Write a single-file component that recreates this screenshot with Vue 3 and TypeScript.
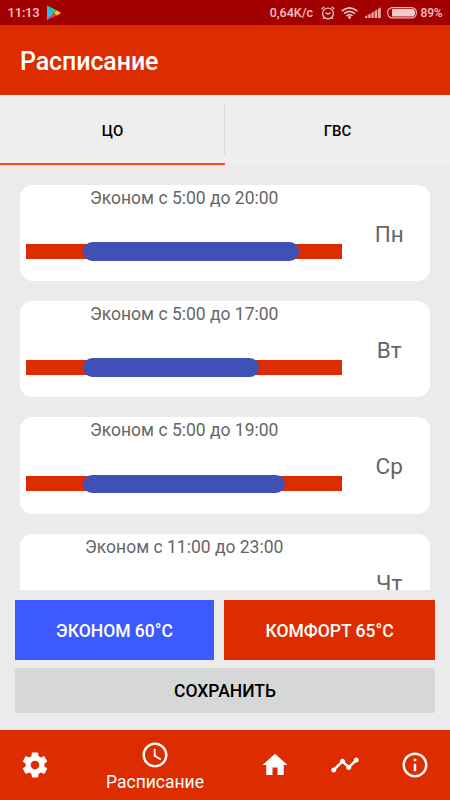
<script setup lang="ts">
interface DaySchedule {
  day: string
  from: number
  to: number
}

const schedule: DaySchedule[] = [
  { day: 'Пн', from: 5, to: 20 },
  { day: 'Вт', from: 5, to: 17 },
  { day: 'Ср', from: 5, to: 19 },
  { day: 'Чт', from: 11, to: 23 },
]

const THUMB = 9.2

function rangeStyle(item: DaySchedule) {
  const start = (item.from / 24) * 100
  const span = ((item.to - item.from) / 24) * 100
  return {
    left: `calc(${start}% - ${THUMB}px)`,
    width: `calc(${span}% + ${THUMB * 2}px)`,
  }
}
</script>

<template>
  <div class="screen">
    <div class="status">
      <span class="time">11:13</span>
      <svg class="play" width="15" height="16" viewBox="0 0 15 16">
        <path d="M1 0.5V15L8 8z" fill="#25c4ee" />
        <path d="M1 0.5L11 5.6L8 8z" fill="#22d68c" />
        <path d="M1 15L11 10.4L8 8z" fill="#f23a50" />
        <path d="M11 5.4L15 7.9L11 10.6L8 8z" fill="#fccb16" />
      </svg>
      <span class="speed">0,64K/c</span>
      <svg class="alarm" width="14" height="14" viewBox="0 0 14 14" fill="none" stroke="#f0c5c5" stroke-width="1.25">
        <circle cx="7" cy="7.4" r="5.4" />
        <path d="M4.5 6.6L7 8.2L9.6 6.5M0.7 3.2L3.3 0.8M13.3 3.2L10.7 0.8M2.9 11.6L2 12.8M11.1 11.6L12 12.8" />
      </svg>
      <svg class="wifi" width="17" height="12" viewBox="0 0 17 12" fill="none" stroke="#f0c5c5" stroke-width="1.6">
        <path d="M0.7 4.2Q8.5-2.4 16.3 4.2M3.1 6.7Q8.5 2.1 13.9 6.7M5.5 9Q8.5 6.5 11.5 9" />
        <circle cx="8.5" cy="10.4" r="1.4" fill="#f0c5c5" stroke="none" />
      </svg>
      <svg class="signal" width="16" height="11" viewBox="0 0 16 11" fill="#e3a9a9">
        <path d="M0 11V9.6L2.4 8.3V11zM3.2 11V7.8L5.6 6.5V11zM6.4 11V6L8.8 4.6V11zM9.6 11V4.1L12 2.8V11zM12.8 11V2.3L15.8 0.2V11z" />
      </svg>
      <svg class="battery" width="30" height="12" viewBox="0 0 30 12">
        <rect x="0.6" y="0.6" width="28.8" height="10.3" rx="4.8" fill="none" stroke="#eab9b9" stroke-width="1.1" />
        <path d="M5 2H25.5Q28 2.6 28 5.75T25.5 9.5H5z" fill="#f2cccc" />
      </svg>
      <span class="percent">89%</span>
    </div>

    <header class="title">Расписание</header>

    <nav class="tabs">
      <div class="tab active">ЦО</div>
      <div class="tab">ГВС</div>
    </nav>

    <main class="list">
      <section v-for="item in schedule" :key="item.day" class="card">
        <div class="range">
          <div class="label">Эконом с {{ item.from }}:00 до {{ item.to }}:00</div>
          <div class="track">
            <div class="bar" :style="rangeStyle(item)"></div>
          </div>
        </div>
        <div class="day">{{ item.day }}</div>
      </section>
    </main>

    <div class="modes">
      <button class="mode eco">ЭКОНОМ 60°C</button>
      <button class="mode comfort">КОМФОРТ 65°C</button>
    </div>
    <button class="save">СОХРАНИТЬ</button>

    <footer class="bottom">
      <div class="item">
        <svg width="30" height="30" viewBox="0 0 24 24" fill="#fff">
          <path d="M19.43 12.98c.04-.32.07-.64.07-.98s-.03-.66-.07-.98l2.11-1.65c.19-.15.24-.42.12-.64l-2-3.46c-.12-.22-.39-.3-.61-.22l-2.49 1c-.52-.4-1.08-.73-1.69-.98l-.38-2.65C14.46 2.18 14.25 2 14 2h-4c-.25 0-.46.18-.49.42l-.38 2.65c-.61.25-1.17.59-1.69.98l-2.49-1c-.23-.09-.49 0-.61.22l-2 3.46c-.13.22-.07.49.12.64l2.11 1.65c-.04.32-.07.65-.07.98s.03.66.07.98l-2.11 1.65c-.19.15-.24.42-.12.64l2 3.46c.12.22.39.3.61.22l2.49-1c.52.4 1.08.73 1.69.98l.38 2.65c.03.24.24.42.49.42h4c.25 0 .46-.18.49-.42l.38-2.65c.61-.25 1.17-.59 1.69-.98l2.49 1c.23.09.49 0 .61-.22l2-3.46c.12-.22.07-.49-.12-.64l-2.11-1.65zM12 15.5c-1.93 0-3.5-1.57-3.5-3.5s1.57-3.5 3.5-3.5 3.5 1.57 3.5 3.5-1.57 3.5-3.5 3.5z" />
        </svg>
      </div>
      <div class="item current">
        <svg width="30" height="30" viewBox="0 0 24 24" fill="#fff">
          <path d="M11.99 2C6.47 2 2 6.48 2 12s4.47 10 9.99 10C17.52 22 22 17.52 22 12S17.52 2 11.99 2zM12 20c-4.42 0-8-3.58-8-8s3.58-8 8-8 8 3.58 8 8-3.58 8-8 8zm.5-13H11v6l5.25 3.15.75-1.23-4.5-2.67z" />
        </svg>
        <span>Расписание</span>
      </div>
      <div class="item">
        <svg width="30" height="30" viewBox="0 0 24 24" fill="#fff">
          <path d="M10 20v-6h4v6h5v-8h3L12 3 2 12h3v8z" />
        </svg>
      </div>
      <div class="item">
        <svg width="30" height="30" viewBox="0 0 24 24" fill="#fff">
          <path d="M23 8c0 1.1-.9 2-2 2-.18 0-.35-.02-.51-.07l-3.56 3.55c.05.16.07.34.07.52 0 1.1-.9 2-2 2s-2-.9-2-2c0-.18.02-.36.07-.52l-2.55-2.55c-.16.05-.34.07-.52.07s-.36-.02-.52-.07l-4.55 4.56c.05.16.07.33.07.51 0 1.1-.9 2-2 2s-2-.9-2-2 .9-2 2-2c.18 0 .35.02.51.07l4.56-4.55C8.02 9.36 8 9.18 8 9c0-1.1.9-2 2-2s2 .9 2 2c0 .18-.02.36-.07.52l2.55 2.55c.16-.05.34-.07.52-.07s.36.02.52.07l3.55-3.56C19.02 8.35 19 8.18 19 8c0-1.1.9-2 2-2s2 .9 2 2z" />
        </svg>
      </div>
      <div class="item">
        <svg width="30" height="30" viewBox="0 0 24 24" fill="#fff">
          <path d="M11 17h2v-6h-2v6zm1-15C6.48 2 2 6.48 2 12s4.48 10 10 10 10-4.48 10-10S17.52 2 12 2zm0 18c-4.41 0-8-3.59-8-8s3.59-8 8-8 8 3.59 8 8-3.59 8-8 8zM11 9h2V7h-2v2z" />
        </svg>
      </div>
    </footer>
  </div>
</template>

<style>
body {
  margin: 0;
}
</style>

<style scoped>
.screen {
  width: 450px;
  height: 800px;
  display: flex;
  flex-direction: column;
  overflow: hidden;
  background: #ebebeb;
  font-family: Roboto, "Noto Sans", sans-serif;
}
svg {
  display: block;
  flex: none;
}
.status {
  height: 25px;
  flex: none;
  box-sizing: border-box;
  display: flex;
  align-items: center;
  padding: 0 7.5px 0 7.5px;
  background: #a30000;
  color: #f0c5c5;
  font-weight: 500;
  white-space: nowrap;
}
.time {
  width: 38px;
  font-size: 13px;
  letter-spacing: -0.2px;
}
.speed {
  margin-left: auto;
  font-size: 12.5px;
}
.alarm {
  margin-left: 7.5px;
}
.wifi {
  margin-left: 6.5px;
}
.signal {
  margin-left: 7px;
}
.battery {
  margin-left: 5.5px;
}
.percent {
  margin-left: 4px;
  font-size: 12px;
  letter-spacing: -0.2px;
}
.title {
  height: 70px;
  flex: none;
  box-sizing: border-box;
  padding-left: 20px;
  line-height: 73px;
  background: #dd2c00;
  color: #fff;
  font-size: 25px;
  letter-spacing: -0.1px;
  font-weight: 500;
}
.tabs {
  height: 70px;
  flex: none;
  display: flex;
  align-items: stretch;
  background: #eeeeee;
}
.tab {
  flex: 1;
  box-sizing: border-box;
  display: flex;
  align-items: center;
  justify-content: center;
  padding-top: 2px;
  font-size: 15px;
  letter-spacing: -0.1px;
  font-weight: 500;
  color: #000;
}
.tab.active {
  border-bottom: 2px solid #ff4a10;
  padding-top: 4px;
  background: linear-gradient(#dcdcdc, #dcdcdc) right 10px / 1px 50px no-repeat;
}
.list {
  height: 425px;
  flex: none;
  box-sizing: border-box;
  padding: 19.8px 20px 0;
  overflow: hidden;
}
.card {
  height: 96.3px;
  margin-bottom: 20px;
  display: flex;
  border-radius: 12.5px;
  background: #fff;
  color: #666;
}
.range {
  width: 315.8px;
  padding: 0 6.3px;
}
.label {
  height: 59px;
  line-height: 26px;
  text-align: center;
  font-size: 17.5px;
}
.track {
  position: relative;
  height: 15px;
  background: #dd2c00;
}
.bar {
  position: absolute;
  top: -1.9px;
  height: 18.8px;
  border-radius: 9.4px;
  background: #3f51b5;
}
.day {
  flex: 1;
  line-height: 98.6px;
  text-align: center;
  font-size: 22.5px;
}
.modes {
  display: flex;
  gap: 10px;
  padding: 10px 15px 0;
}
.mode {
  height: 60px;
  border: 0;
  padding: 2px 0 0;
  color: #fff;
  font-family: inherit;
  font-size: 17.5px;
  font-weight: 500;
}
.eco {
  width: 199px;
  background: #3d5afe;
}
.comfort {
  flex: 1;
  background: #dd2c00;
}
.save {
  height: 45px;
  flex: none;
  margin: 7.5px 15px 0;
  border: 0;
  border-radius: 2.5px;
  padding: 1px 0 0;
  background: #d6d7d7;
  color: #000;
  font-family: inherit;
  font-size: 17.5px;
  font-weight: 500;
}
.bottom {
  height: 70px;
  margin-top: auto;
  display: flex;
  background: #dd2c00;
  color: #fff;
}
.item {
  width: 70px;
  display: flex;
  flex-direction: column;
  align-items: center;
  justify-content: center;
}
.item.current {
  width: 170px;
  justify-content: flex-start;
  padding-top: 10px;
  box-sizing: border-box;
}
.item.current span {
  font-size: 17.5px;
  line-height: 24px;
}
</style>
